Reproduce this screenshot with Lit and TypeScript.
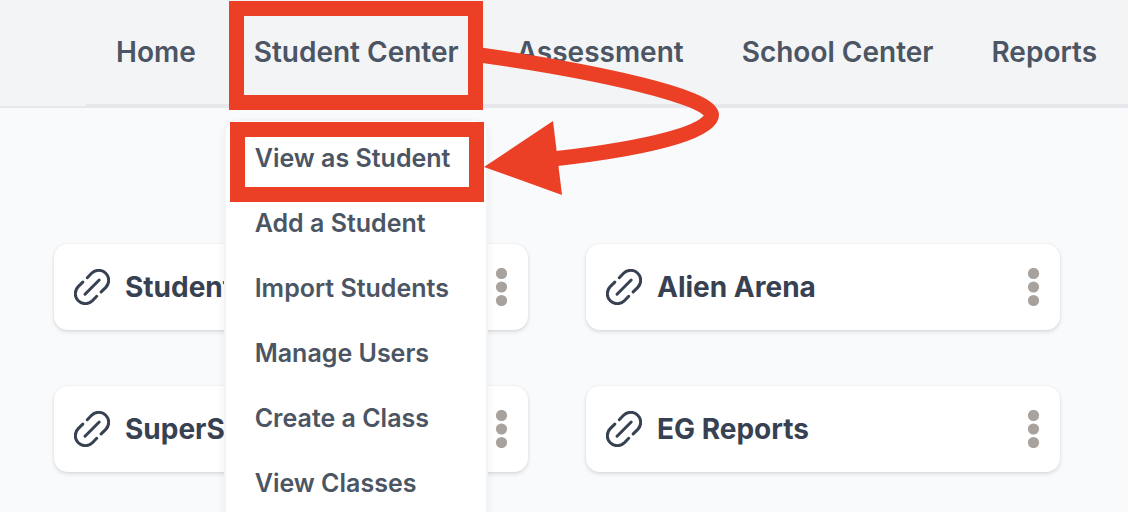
import { LitElement, html, css, svg } from "lit";
import { customElement, property } from "lit/decorators.js";

@customElement("link-card")
class LinkCard extends LitElement {
  @property() label = "";

  static styles = css`
    :host {
      display: block;
    }
    .card {
      display: flex;
      align-items: center;
      gap: 15px;
      padding: 24px 20px;
      border-radius: 14px;
      background: #fff;
      box-shadow: 0 2px 4px rgba(0, 0, 0, 0.12), 0 0 3px rgba(0, 0, 0, 0.05);
    }
    .link {
      flex: 1;
      min-width: 0;
      display: flex;
      align-items: center;
      gap: 15px;
      color: #374151;
      font-size: 28px;
      font-weight: 700;
      line-height: 38px;
      white-space: nowrap;
      text-decoration: none;
    }
    .icon {
      flex: none;
      fill: none;
      stroke: #374151;
      stroke-width: 3;
      stroke-linecap: round;
    }
    .more {
      display: block;
      padding: 0;
      border: 0;
      background: none;
      line-height: 0;
      cursor: pointer;
    }
    .dots {
      fill: #a8a29e;
    }
  `;

  render() {
    return html`
      <div class="card">
        <a class="link" href="#">
          <svg class="icon" width="36" height="36" viewBox="0 0 36 36" aria-hidden="true">
            <path d="M13.3 8.7 17.6 4.3A10 10 0 0 1 31.8 18.4L27.2 22.9" />
            <path d="M22.7 27.3 18.4 31.7A10 10 0 0 1 4.2 17.6L8.8 13.1" />
            <path d="M11 25.2 25.2 11" />
          </svg>
          <span>${this.label}</span>
        </a>
        <button class="more" aria-label="More options">
          <svg class="dots" width="13" height="38" viewBox="0 0 13 38" aria-hidden="true">
            ${[5.5, 19, 32.5].map((y) => svg`<circle cx="6.5" cy=${y} r="5.6" />`)}
          </svg>
        </button>
      </div>
    `;
  }
}

@customElement("app-root")
class AppRoot extends LitElement {
  static styles = css`
    :host {
      display: block;
      position: relative;
      min-height: 100vh;
      overflow: hidden;
      background: #f9fafc;
      color: #4b5563;
      font-family: Inter, "Liberation Sans", sans-serif;
    }
    .header {
      display: flex;
      background: #f3f4f6;
    }
    .lead {
      width: 86px;
      flex: none;
      border-bottom: 2px solid #e5e7eb;
    }
    .nav {
      flex: 1;
      display: flex;
      gap: 58px;
      padding: 34px 30px;
      border-bottom: 4px solid #e5e7eb;
      font-size: 28px;
      font-weight: 600;
      line-height: 36px;
      white-space: nowrap;
    }
    .item {
      position: relative;
    }
    .nav a {
      color: inherit;
      text-decoration: none;
    }
    .menu {
      position: absolute;
      z-index: 1;
      top: 85px;
      left: -30px;
      width: 260px;
      box-sizing: content-box;
      margin: 0;
      padding: 5px 0;
      list-style: none;
      border: 2px solid #f3f4f6;
      border-radius: 14px;
      background: #fff;
      box-shadow: 0 4px 10px rgba(0, 0, 0, 0.06);
      font-size: 25px;
    }
    .menu a {
      display: block;
      padding: 14px 29px 15px;
    }
    .cards {
      display: grid;
      grid-template-columns: 1fr 1fr;
      gap: 56px 58px;
      padding: 136px 68px 40px 54px;
    }
    .marks {
      position: absolute;
      z-index: 2;
      top: 0;
      left: 0;
      pointer-events: none;
      fill: none;
      stroke: #eb4026;
      stroke-width: 15;
    }
    .head {
      fill: #eb4026;
      stroke: none;
    }
  `;

  private menu = [
    "View as Student",
    "Add a Student",
    "Import Students",
    "Manage Users",
    "Create a Class",
    "View Classes",
  ];

  render() {
    return html`
      <header class="header">
        <div class="lead"></div>
        <nav class="nav">
          <a href="#">Home</a>
          <div class="item">
            <a href="#">Student Center</a>
            <ul class="menu">
              ${this.menu.map((m) => html`<li><a href="#">${m}</a></li>`)}
            </ul>
          </div>
          <a href="#">Assessment</a>
          <a href="#">School Center</a>
          <a href="#">Reports</a>
        </nav>
      </header>
      <main class="cards">
        ${["Student", "Alien Arena", "SuperS", "EG Reports"].map(
          (label) => html`<link-card label=${label}></link-card>`
        )}
      </main>
      <svg class="marks" width="730" height="210" viewBox="0 0 730 210" aria-hidden="true">
        <rect x="236.5" y="8.5" width="239" height="94" />
        <rect x="237.5" y="129.5" width="239" height="65" />
        <path d="M480 55C600 72 711 97 711.5 115C711.5 132 650 148 553 159" />
        <path class="head" d="M484 167 553 121 562 195Z" />
      </svg>
    `;
  }
}
